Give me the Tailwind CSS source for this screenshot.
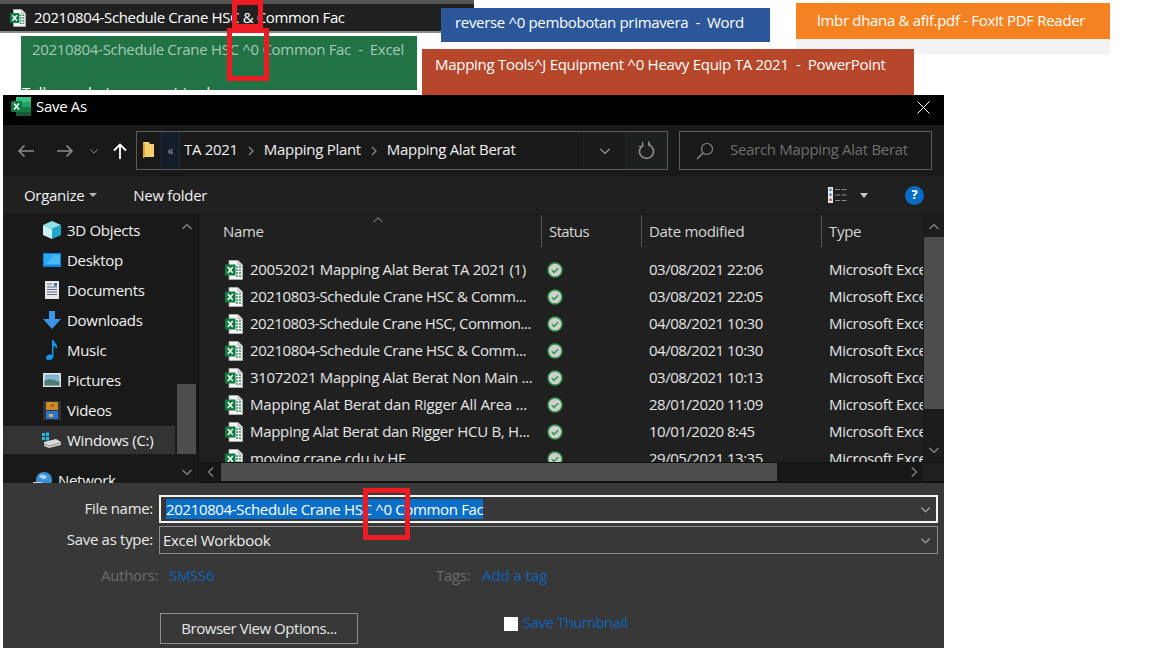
<!DOCTYPE html>
<html lang="en">
<head>
<meta charset="utf-8">
<title>Save As</title>
<script src="https://cdn.jsdelivr.net/npm/@tailwindcss/browser@4"></script>
</head>
<body class="bg-white">
<svg width="0" height="0" class="absolute">
  <defs>
    <symbol id="xl" viewBox="0 0 18 20">
      <path d="M4 0.5h9l4.5 4.5v14.5H4z" fill="#f4f4f4" stroke="#b5b5b5" stroke-width="0.8"/>
      <path d="M13 0.5v4.5h4.5" fill="#d8d8d8" stroke="#a5a5a5" stroke-width="0.6"/>
      <path d="M11 7h5M11 10h5M11 13h5M11 16h5" stroke="#2f8f5b" stroke-width="1.6"/>
      <path d="M13.5 6v11" stroke="#f4f4f4" stroke-width="1"/>
      <rect x="0" y="4.5" width="10.5" height="11" fill="#107c41"/>
      <path d="M2.8 7l5 6M7.8 7l-5 6" stroke="#fff" stroke-width="1.5"/>
    </symbol>
    <symbol id="check" viewBox="0 0 16 16">
      <circle cx="8" cy="8" r="7" fill="#cfcfcf" stroke="#2e9a45" stroke-width="1.4"/>
      <path d="M4.8 8.2l2.2 2.2 4.2-4.2" fill="none" stroke="#2e9a45" stroke-width="1.5"/>
    </symbol>
    <symbol id="chev" viewBox="0 0 12 12">
      <path d="M1.5 4l4.5 4.5L10.5 4" fill="none" stroke="currentColor" stroke-width="1.2"/>
    </symbol>
  </defs>
</svg>

<div class="relative w-[1152px] h-[648px] overflow-hidden font-['Open_Sans',sans-serif] bg-white">

  <!-- Overlapping window thumbnails behind the dialog -->
  <div class="absolute left-0 top-0 w-[474px] h-[33px] bg-[#202020] border-t-[4px] border-b-[2px] border-t-[#555] border-b-[#8a8a8a] flex items-center pl-[9px] gap-[7px] text-white text-[15px] tracking-[-0.37px]">
    <svg class="w-[18px] h-[18px]" viewBox="0 0 18 20"><use href="#xl"/></svg>
    <span>20210804-Schedule Crane HSC &amp; Common Fac</span>
  </div>

  <div class="absolute left-[21px] top-[36px] w-[396px] h-[54px] bg-[#217346] overflow-hidden text-[15px] tracking-[-0.31px]">
    <div class="pl-[11px] pt-[2px] text-[#a6c8b4] whitespace-pre">20210804-Schedule Crane HSC ^0 Common Fac  -  Excel</div>
    <div class="pl-px pt-[20px] text-white tracking-[0px]">Tell me what you want to do</div>
  </div>

  <div class="absolute left-[441px] top-[8px] w-[329px] h-[34px] bg-[#2b579a] text-white text-[15px] tracking-[-0.33px] pl-[14px] pt-[3px] whitespace-pre">reverse ^0 pembobotan primavera  -  Word</div>

  <div class="absolute left-[796px] top-[3px] w-[314px] h-[51px] bg-[#f3f3f3]">
    <div class="h-[36px] bg-[#f58220] text-white text-[15px] tracking-[-0.32px] pl-[21px] pt-[6px] whitespace-pre">lmbr dhana &amp; afif.pdf - Foxit PDF Reader</div>
  </div>

  <div class="absolute left-[422px] top-[49px] w-[492px] h-[47px] bg-[#b7472a] text-white text-[15px] tracking-[-0.27px] pl-[13px] pt-[4px] whitespace-pre">Mapping Tools^J Equipment ^0 Heavy Equip TA 2021  -  PowerPoint</div>

  <!-- Save As dialog -->
  <div class="absolute left-[3px] top-[95px] w-[941px] h-[553px] flex flex-col text-[15px] tracking-[-0.3px] text-[#f0f0f0]">

    <!-- Title bar -->
    <div class="h-[30px] shrink-0 bg-black flex items-start text-white">
      <svg class="ml-[8px] mt-[2px] w-[20px] h-[19px]" viewBox="0 0 20 19">
        <rect x="5" y="0" width="15" height="5" fill="#33c481"/>
        <rect x="5" y="5" width="15" height="5" fill="#21a366"/>
        <rect x="5" y="10" width="15" height="5" fill="#107c41"/>
        <rect x="5" y="15" width="15" height="4" fill="#185c37"/>
        <rect x="0" y="4" width="11" height="11" fill="#107c41"/>
        <path d="M3 6.5l5 6M8 6.5l-5 6" stroke="#fff" stroke-width="1.5"/>
      </svg>
      <span class="ml-[5px]">Save As</span>
      <svg class="ml-auto mr-[14px] mt-[6px] w-[13px] h-[13px]" viewBox="0 0 13 13"><path d="M0.5 0.5l12 12M12.5 0.5l-12 12" stroke="#fff" stroke-width="1"/></svg>
    </div>

    <!-- Navigation bar -->
    <div class="h-[51px] shrink-0 bg-[#191919] flex items-center">
      <svg class="ml-[14px] w-[18px] h-[14px]" viewBox="0 0 18 14"><path d="M17 7H2M7.5 1.5L2 7l5.500 5.500" fill="none" stroke="#8c8c8c" stroke-width="1.6"/></svg>
      <svg class="ml-[21px] w-[18px] h-[14px]" viewBox="0 0 18 14"><path d="M1 7h15M10.500 1.500L16 7l-5.500 5.500" fill="none" stroke="#8c8c8c" stroke-width="1.6"/></svg>
      <svg class="ml-[15px] w-[10px] h-[10px] text-[#8c8c8c]" viewBox="0 0 12 12"><use href="#chev"/></svg>
      <svg class="ml-[14px] w-[14px] h-[16px]" viewBox="0 0 14 16"><path d="M7 16V2M1 7.500L7 1.500l6 6" fill="none" stroke="#fff" stroke-width="1.800"/></svg>
      <div class="ml-[9px] w-[532px] h-[39px] border border-[#5c5c5c] flex items-center">
        <svg class="ml-[5px] w-[13px] h-[17px]" viewBox="0 0 13 17"><path d="M1 0h6l1 2h4v13H3l-2 1z" fill="#f5cf6e"/><path d="M1 0v16l2-1V2z" fill="#e0a92e"/></svg>
        <div class="ml-[6px] w-[19px] h-[37px] bg-[#141d2a] border-x border-[#1e2b3a] flex items-center justify-center text-[#9a9a9a] text-[12px] tracking-normal">«</div>
        <span class="ml-[4px] -mt-[2px]">TA 2021</span>
        <svg class="ml-[10px] w-[6px] h-[10px]" viewBox="0 0 6 10"><path d="M1 1l4 4-4 4" fill="none" stroke="#8c8c8c" stroke-width="1.200"/></svg>
        <span class="ml-[10px] -mt-[2px]">Mapping Plant</span>
        <svg class="ml-[10px] w-[6px] h-[10px]" viewBox="0 0 6 10"><path d="M1 1l4 4-4 4" fill="none" stroke="#8c8c8c" stroke-width="1.200"/></svg>
        <span class="ml-[10px] -mt-[2px]">Mapping Alat Berat</span>
        <div class="ml-auto w-[42px] h-[37px] bg-[#1b1b1b] border-l border-[#222] flex items-center justify-center text-[#9a9a9a]">
          <svg class="w-[12px] h-[12px]" viewBox="0 0 12 12"><use href="#chev"/></svg>
        </div>
        <div class="w-[42px] h-[37px] bg-[#1e2020] border-l border-[#262626] flex items-center justify-center">
          <svg class="w-[17px] h-[19px]" viewBox="0 0 17 19"><path d="M5.500 4A7 7 0 1 0 11.500 4M11 0.500V5h-0" fill="none" stroke="#8c8c8c" stroke-width="1.700"/><path d="M4.500 1v4.500H0.500" fill="none" stroke="#8c8c8c" stroke-width="1.200"/></svg>
        </div>
      </div>
      <div class="ml-[11px] w-[253px] h-[39px] border border-[#5c5c5c] flex items-center text-[#6f6f6f]">
        <svg class="ml-[16px] w-[18px] h-[18px]" viewBox="0 0 18 18"><circle cx="11" cy="7" r="5.500" fill="none" stroke="#8a8a8a" stroke-width="1.200"/><path d="M7 11l-6 6" stroke="#8a8a8a" stroke-width="1.400"/></svg>
        <span class="ml-[16px] -mt-[2px]">Search Mapping Alat Berat</span>
      </div>
    </div>

    <!-- Command bar -->
    <div class="h-[39px] shrink-0 bg-[#202020] flex items-center border-b border-[#161616] text-[#f0f0f0]">
      <span class="ml-[21px]">Organize</span>
      <span class="ml-[5px] w-0 h-0 border-x-[4px] border-x-transparent border-t-[4px] border-t-[#b8b8b8]"></span>
      <span class="ml-[36px]">New folder</span>
      <svg class="ml-auto w-[19px] h-[16px]" viewBox="0 0 19 16">
        <rect x="0" y="0" width="5" height="16" fill="#e8e8e8"/>
        <rect x="1.500" y="1.500" width="2" height="2.500" fill="#3f74b5"/><rect x="1.500" y="6.500" width="2" height="2.500" fill="#3f74b5"/><rect x="1.500" y="11.500" width="2" height="2.500" fill="#b5392a"/>
        <path d="M7 2.500h12M7 8h12M7 13.500h12" stroke="#8a8a8a" stroke-width="1" stroke-dasharray="5 1.500"/>
      </svg>
      <span class="ml-[13px] w-0 h-0 border-x-[4px] border-x-transparent border-t-[5px] border-t-[#c8c8c8]"></span>
      <span class="ml-[37px] mr-[20px] w-[19px] h-[19px] rounded-full bg-[#0a6cc4] text-white text-[13px] font-bold flex items-center justify-center tracking-normal">?</span>
    </div>

    <!-- Body -->
    <div class="h-[268px] shrink-0 flex bg-[#202020]">
      <!-- Nav pane -->
      <div class="w-[196px] shrink-0 bg-[#191919] flex border-r border-[#111] overflow-hidden">
        <div class="w-[172px] shrink-0 overflow-hidden text-[#f2f2f2]">
          <div class="h-[30px] flex items-center pl-[40px] gap-[6px]">
            <svg class="w-[18px] h-[18px]" viewBox="0 0 18 18"><path d="M9 0l9 4-9 4-9-4z" fill="#8fe3ec"/><path d="M0 4l9 4v10l-9-4z" fill="#c9f2f5"/><path d="M18 4l-9 4v10l9-4z" fill="#1fa8c9"/></svg>
            <span>3D Objects</span>
          </div>
          <div class="h-[30px] flex items-center pl-[40px] gap-[6px]">
            <svg class="w-[18px] h-[14px]" viewBox="0 0 18 14"><rect width="18" height="14" fill="#0a82e0"/><rect x="1" y="1" width="16" height="11" fill="#2aa6f2"/><path d="M3 11L11 2h6v9z" fill="#4cb9f5"/></svg>
            <span>Desktop</span>
          </div>
          <div class="h-[30px] flex items-center pl-[42px] gap-[8px]">
            <svg class="w-[14px] h-[18px]" viewBox="0 0 14 18"><rect width="14" height="18" fill="#e8e8e8"/><path d="M2 3h5M2 6h10M2 8.500h10M2 11h10M2 13.500h10" stroke="#5a6f8f"/><path d="M9 2l3 0v3h-3z" fill="#3a7fc4"/></svg>
            <span>Documents</span>
          </div>
          <div class="h-[30px] flex items-center pl-[40px] gap-[6px]">
            <svg class="w-[18px] h-[18px]" viewBox="0 0 18 18"><path d="M6 0h6v8h6l-9 10-9-10h6z" fill="#3d95e6"/></svg>
            <span>Downloads</span>
          </div>
          <div class="h-[30px] flex items-center pl-[43px] gap-[9px]">
            <svg class="w-[12px] h-[20px]" viewBox="0 0 12 20"><path d="M6 0h1.500c0.500 3 4.500 4 3.500 9-1-2-2.500-3-3.500-3v10c0 2.500-2.500 4-5 4s-3-2-2-3.500S4 14 6 15z" fill="#0a9af0"/></svg>
            <span>Music</span>
          </div>
          <div class="h-[30px] flex items-center pl-[40px] gap-[6px]">
            <svg class="w-[18px] h-[14px]" viewBox="0 0 18 14"><rect width="18" height="14" fill="#e6e6e6"/><rect x="1.500" y="1.500" width="15" height="11" fill="#7fb5cf"/><path d="M1.500 8c4-3 8-2 15 1v3.500h-15z" fill="#4f7a76"/></svg>
            <span>Pictures</span>
          </div>
          <div class="h-[30px] flex items-center pl-[40px] gap-[6px]">
            <svg class="w-[18px] h-[19px]" viewBox="0 0 18 19"><rect width="18" height="19" fill="#333"/><rect x="3" y="1" width="12" height="8" fill="#c98a2c"/><rect x="3" y="10" width="12" height="8" fill="#2a74d4"/><rect x="8" y="3" width="3" height="3" fill="#d04a2c"/><rect x="6" y="13" width="4" height="3" fill="#e5b23c"/></svg>
            <span>Videos</span>
          </div>
          <div class="h-[28px] mt-px flex items-center pl-[39px] gap-[6px] bg-[#333]">
            <svg class="w-[19px] h-[16px]" viewBox="0 0 19 16"><path d="M0 1h3v3H0zM4 0.500h3v3.500H4zM0 5h3v3H0zM4 5h3v3.500H4z" fill="#22b8f0"/><path d="M2 10l12-3 5 3v3l-12 3-5-2z" fill="#d8d8d8"/><path d="M2 12l5 2 12-3" fill="none" stroke="#888"/></svg>
            <span>Windows (C:)</span>
          </div>
          <div class="h-[22px] mt-[15px] flex items-center pl-[30px] gap-[6px]">
            <svg class="w-[19px] h-[19px]" viewBox="0 0 19 19"><circle cx="11" cy="9" r="8" fill="#3c8fd8"/><path d="M6 5c3-3 6-1 8 1-2 3-5 3-8-1z" fill="#a7d3f0"/><rect x="0" y="11" width="9" height="6" fill="#d8d8d8"/></svg>
            <span>Network</span>
          </div>
        </div>
        <div class="w-[19px] ml-[2px] flex flex-col items-center text-[#8a8a8a] relative">
          <svg class="mt-[6px] w-[12px] h-[12px] rotate-180" viewBox="0 0 12 12"><use href="#chev"/></svg>
          <div class="absolute left-0 top-[169px] w-[19px] h-[70px] bg-[#4d4d4d]"></div>
          <svg class="mt-auto mb-[5px] w-[12px] h-[12px]" viewBox="0 0 12 12"><use href="#chev"/></svg>
        </div>
      </div>

      <!-- File list -->
      <div class="flex-1 flex flex-col min-w-0 ml-[1px]">
        <div class="flex-1 flex min-h-0">
          <div class="w-[723px] shrink-0 overflow-hidden relative">
            <svg class="absolute left-[173px] top-[2px] w-[10px] h-[6px]" viewBox="0 0 10 6"><path d="M0.500 5L5 0.800 9.500 5" fill="none" stroke="#9a9a9a"/></svg>
            <!-- Header -->
            <div class="h-[32px] grid grid-cols-[341px_100px_180px_102px] items-center text-[#d8d8d8]">
              <div class="pl-[23px] h-full flex items-center">Name</div>
              <div class="h-full flex items-center pl-[7px] border-l border-[#555] tracking-[-0.6px]">Status</div>
              <div class="h-full flex items-center pl-[7px] border-l border-[#555]">Date modified</div>
              <div class="h-full flex items-center pl-[7px] border-l border-[#555]">Type</div>
            </div>
            <div class="pt-[9px] text-[#e6e6e6]">
              <div class="h-[27px] grid grid-cols-[341px_100px_180px_102px] items-center">
                <div class="flex items-center pl-[25px] gap-[7px] whitespace-nowrap overflow-hidden"><svg class="w-[18px] h-[20px] shrink-0" viewBox="0 0 18 20"><use href="#xl"/></svg><span>20052021 Mapping Alat Berat TA 2021 (1)</span></div>
                <div class="pl-[6px]"><svg class="w-[16px] h-[16px]" viewBox="0 0 16 16"><use href="#check"/></svg></div>
                <div class="pl-[8px] tracking-[-0.5px]">03/08/2021 22:06</div>
                <div class="pl-[8px] whitespace-nowrap overflow-hidden">Microsoft Excel W</div>
              </div>
              <div class="h-[27px] grid grid-cols-[341px_100px_180px_102px] items-center">
                <div class="flex items-center pl-[25px] gap-[7px] whitespace-nowrap overflow-hidden"><svg class="w-[18px] h-[20px] shrink-0" viewBox="0 0 18 20"><use href="#xl"/></svg><span class="tracking-[-0.43px]">20210803-Schedule Crane HSC &amp; Comm...</span></div>
                <div class="pl-[6px]"><svg class="w-[16px] h-[16px]" viewBox="0 0 16 16"><use href="#check"/></svg></div>
                <div class="pl-[8px] tracking-[-0.5px]">03/08/2021 22:05</div>
                <div class="pl-[8px] whitespace-nowrap overflow-hidden">Microsoft Excel W</div>
              </div>
              <div class="h-[27px] grid grid-cols-[341px_100px_180px_102px] items-center">
                <div class="flex items-center pl-[25px] gap-[7px] whitespace-nowrap overflow-hidden"><svg class="w-[18px] h-[20px] shrink-0" viewBox="0 0 18 20"><use href="#xl"/></svg><span class="tracking-[-0.48px]">20210803-Schedule Crane HSC, Common...</span></div>
                <div class="pl-[6px]"><svg class="w-[16px] h-[16px]" viewBox="0 0 16 16"><use href="#check"/></svg></div>
                <div class="pl-[8px] tracking-[-0.5px]">04/08/2021 10:30</div>
                <div class="pl-[8px] whitespace-nowrap overflow-hidden">Microsoft Excel W</div>
              </div>
              <div class="h-[27px] grid grid-cols-[341px_100px_180px_102px] items-center">
                <div class="flex items-center pl-[25px] gap-[7px] whitespace-nowrap overflow-hidden"><svg class="w-[18px] h-[20px] shrink-0" viewBox="0 0 18 20"><use href="#xl"/></svg><span class="tracking-[-0.43px]">20210804-Schedule Crane HSC &amp; Comm...</span></div>
                <div class="pl-[6px]"><svg class="w-[16px] h-[16px]" viewBox="0 0 16 16"><use href="#check"/></svg></div>
                <div class="pl-[8px] tracking-[-0.5px]">04/08/2021 10:30</div>
                <div class="pl-[8px] whitespace-nowrap overflow-hidden">Microsoft Excel W</div>
              </div>
              <div class="h-[27px] grid grid-cols-[341px_100px_180px_102px] items-center">
                <div class="flex items-center pl-[25px] gap-[7px] whitespace-nowrap overflow-hidden"><svg class="w-[18px] h-[20px] shrink-0" viewBox="0 0 18 20"><use href="#xl"/></svg><span>31072021 Mapping Alat Berat Non Main ...</span></div>
                <div class="pl-[6px]"><svg class="w-[16px] h-[16px]" viewBox="0 0 16 16"><use href="#check"/></svg></div>
                <div class="pl-[8px] tracking-[-0.5px]">03/08/2021 10:13</div>
                <div class="pl-[8px] whitespace-nowrap overflow-hidden">Microsoft Excel W</div>
              </div>
              <div class="h-[27px] grid grid-cols-[341px_100px_180px_102px] items-center">
                <div class="flex items-center pl-[25px] gap-[7px] whitespace-nowrap overflow-hidden"><svg class="w-[18px] h-[20px] shrink-0" viewBox="0 0 18 20"><use href="#xl"/></svg><span class="tracking-[-0.2px]">Mapping Alat Berat dan Rigger All Area ...</span></div>
                <div class="pl-[6px]"><svg class="w-[16px] h-[16px]" viewBox="0 0 16 16"><use href="#check"/></svg></div>
                <div class="pl-[8px] tracking-[-0.5px]">28/01/2020 11:09</div>
                <div class="pl-[8px] whitespace-nowrap overflow-hidden">Microsoft Excel W</div>
              </div>
              <div class="h-[27px] grid grid-cols-[341px_100px_180px_102px] items-center">
                <div class="flex items-center pl-[25px] gap-[7px] whitespace-nowrap overflow-hidden"><svg class="w-[18px] h-[20px] shrink-0" viewBox="0 0 18 20"><use href="#xl"/></svg><span>Mapping Alat Berat dan Rigger HCU B, H...</span></div>
                <div class="pl-[6px]"><svg class="w-[16px] h-[16px]" viewBox="0 0 16 16"><use href="#check"/></svg></div>
                <div class="pl-[8px] tracking-[-0.5px]">10/01/2020 8:45</div>
                <div class="pl-[8px] whitespace-nowrap overflow-hidden">Microsoft Excel W</div>
              </div>
              <div class="h-[27px] grid grid-cols-[341px_100px_180px_102px] items-center">
                <div class="flex items-center pl-[25px] gap-[7px] whitespace-nowrap overflow-hidden"><svg class="w-[18px] h-[20px] shrink-0" viewBox="0 0 18 20"><use href="#xl"/></svg><span>moving crane cdu iv HF</span></div>
                <div class="pl-[6px]"><svg class="w-[16px] h-[16px]" viewBox="0 0 16 16"><use href="#check"/></svg></div>
                <div class="pl-[8px] tracking-[-0.5px]">29/05/2021 13:35</div>
                <div class="pl-[8px] whitespace-nowrap overflow-hidden">Microsoft Excel W</div>
              </div>
            </div>
          </div>
          <!-- Vertical scrollbar -->
          <div class="w-[21px] shrink-0 bg-[#1c1c1c] flex flex-col items-center text-[#8a8a8a]">
            <svg class="mt-[6px] w-[12px] h-[12px] rotate-180" viewBox="0 0 12 12"><use href="#chev"/></svg>
            <div class="mt-[4px] w-[20px] h-[172px] bg-[#4d4d4d]"></div>
            <svg class="mt-auto mb-[6px] w-[12px] h-[12px]" viewBox="0 0 12 12"><use href="#chev"/></svg>
          </div>
        </div>
        <!-- Horizontal scrollbar -->
        <div class="h-[21px] shrink-0 flex border-t border-[#111] border-b-[2px] border-b-[#111]">
          <div class="w-[21px] bg-[#171717] flex items-center justify-center text-[#8a8a8a]"><svg class="w-[12px] h-[12px] rotate-90" viewBox="0 0 12 12"><use href="#chev"/></svg></div>
          <div class="w-[556px] bg-[#4d4d4d]"></div>
          <div class="w-[146px] bg-[#171717] flex items-center justify-end pr-[3px] text-[#8a8a8a]"><svg class="w-[12px] h-[12px] -rotate-90" viewBox="0 0 12 12"><use href="#chev"/></svg></div>
          <div class="flex-1 bg-[#202020]"></div>
        </div>
      </div>
    </div>

    <!-- Bottom panel -->
    <div class="flex-1 bg-[#383838] relative">
      <div class="absolute left-[156px] top-[12px] w-[779px] h-[28px] border-2 border-white/95 flex items-center pl-[5px]">
        <span class="bg-[#0a6fc9] text-white leading-[20px] whitespace-pre tracking-[-0.35px] -mt-px">20210804-Schedule Crane HSC ^0 Common Fac</span>
        <svg class="ml-auto mr-[5px] w-[11px] h-[11px] text-[#b8b8b8]" viewBox="0 0 12 12"><use href="#chev"/></svg>
      </div>
      <div class="absolute left-[156px] top-[43px] w-[779px] h-[28px] border border-[#8e8e8e] flex items-center pl-[3px] text-[#efefef]">
        <span>Excel Workbook</span>
        <svg class="ml-auto mr-[6px] w-[11px] h-[11px] text-[#b8b8b8]" viewBox="0 0 12 12"><use href="#chev"/></svg>
      </div>
      <div class="absolute left-0 top-[14px] w-[150px] text-right text-[#e8e8e8]">File name:</div>
      <div class="absolute left-0 top-[45px] w-[150px] text-right text-[#e8e8e8]">Save as type:</div>
      <div class="absolute left-[98px] top-[81px] text-[#6c6c6c]">Authors:</div>
      <div class="absolute left-[166px] top-[81px] text-[#0f62b8]">SMSS6</div>
      <div class="absolute left-[433px] top-[81px] text-[#6c6c6c]">Tags:</div>
      <div class="absolute left-[479px] top-[81px] text-[#0f62b8] tracking-[-0.05px]">Add a tag</div>
      <button class="absolute left-[157px] top-[130px] w-[198px] h-[31px] border border-[#8e8e8e] text-[#e8e8e8] tracking-[-0.45px]">Browser View Options...</button>
      <div class="absolute left-[501px] top-[134px] w-[14px] h-[14px] bg-white"></div>
      <div class="absolute left-[520px] top-[128px] text-[#0f62b8] tracking-[-0.5px]">Save Thumbnail</div>
    </div>
  </div>

  <!-- Red annotation boxes -->
  <div class="absolute left-[232px] top-0 w-[31px] h-[29px] border-[5px] border-[#ed1c24]"></div>
  <div class="absolute left-[227px] top-[28px] w-[42px] h-[53px] border-[5px] border-[#ed1c24]"></div>
  <div class="absolute left-[363px] top-[488px] w-[47px] h-[52px] border-[5px] border-[#ed1c24]"></div>
</div>
</body>
</html>
